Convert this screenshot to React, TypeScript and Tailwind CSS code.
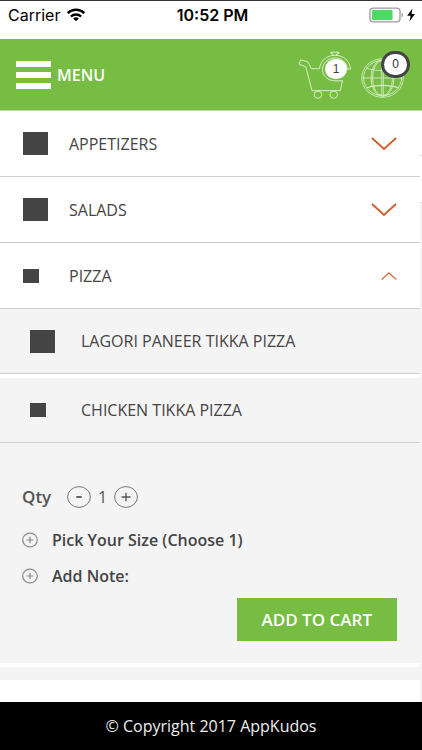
import { useState } from "react";
import type { ReactNode } from "react";
import clsx from "clsx";

interface MenuRowProps {
  label: string;
  open?: boolean;
  nested?: boolean;
  onToggle: () => void;
}

function WifiIcon() {
  return (
    <svg className="h-4 w-5" viewBox="0 0 20 16" fill="none" stroke="#000" strokeWidth="2.4" aria-hidden="true">
      <path d="M1.7 6.1a12 12 0 0 1 16.6 0" />
      <path d="M4.9 9.5a7.4 7.4 0 0 1 10.2 0" />
      <path d="M10 14.3 7.1 11.6a4.2 4.2 0 0 1 5.8 0Z" fill="#000" stroke="none" />
    </svg>
  );
}

function BatteryIcon() {
  return (
    <svg className="h-4 w-12" viewBox="0 0 48 16" aria-hidden="true">
      <rect x="1" y="1.2" width="30" height="13.6" rx="3" fill="#fff" stroke="#9b9b9b" strokeWidth="1.3" />
      <rect x="3" y="3" width="20.5" height="10" rx="1" fill="#4cd964" />
      <path d="M32.6 5.6c1.9.9 1.9 4 0 4.9Z" fill="#9b9b9b" />
      <path d="m43.4 1.6-5.2 7.2h3.4l-1.2 5.8 5.6-7.6h-3.4Z" fill="#000" />
    </svg>
  );
}

function StatusBar() {
  return (
    <div className="grid h-[39px] shrink-0 grid-cols-3 items-center border-t border-[#333] bg-white pr-[5px] pb-2.5 pl-2 font-['Inter',sans-serif] text-black">
      <span className="flex items-center gap-1.5 text-base">
        Carrier
        <WifiIcon />
      </span>
      <span className="text-center text-base font-semibold whitespace-nowrap">10:52 PM</span>
      <span className="flex justify-end">
        <BatteryIcon />
      </span>
    </div>
  );
}

function CartIcon() {
  return (
    <svg className="h-12 w-[53px]" viewBox="0 0 53 48" fill="none" stroke="#d9efc8" strokeWidth="1" strokeLinejoin="round" aria-hidden="true">
      <path d="M21.500 17.700h-8.200L10 11 2.700 8.800 1 13.200l6.700 2.500L14 39.700h28.300l2.200-10.200" />
      <path d="M21.500 17.700C22.200 9.800 28.700 4.300 37 4.300s15 5.500 15.600 13.900h-3.100C48.800 11.500 43.600 7 37.200 7 29.900 7 24.500 12.200 24.500 18.500c0 6.300 5.400 11.300 12.400 11.300h7.600" />
      <path d="M35 4.300V3l-2.200-.6V1.200h8v1.200L38.600 3v1.300" />
      <ellipse cx="20" cy="43.700" rx="3.800" ry="3.600" />
      <ellipse cx="35.700" cy="43.700" rx="3.800" ry="3.600" />
    </svg>
  );
}

function GlobeIcon() {
  return (
    <svg className="h-10 w-[43px]" viewBox="0 0 43 40" fill="none" stroke="#d3ecc0" strokeWidth="0.9" aria-hidden="true">
      <ellipse cx="21.500" cy="20" rx="20.800" ry="19.300" />
      <ellipse cx="21.500" cy="20" rx="19" ry="17.600" />
      <ellipse cx="21.500" cy="20" rx="11.500" ry="18.400" />
      <ellipse cx="21.500" cy="20" rx="10" ry="17.600" />
      <path d="M20.700 1.500v37M22.300 1.500v37M1.500 20h40" />
      <path d="M5.500 10c8.500 3.500 23.500 3.500 32 0" />
      <path d="M5.500 30c8.500-3.500 23.500-3.500 32 0" strokeWidth="1.200" />
    </svg>
  );
}

function Header() {
  return (
    <header className="flex h-[72px] shrink-0 items-center justify-between border-b border-[#bfdca8] bg-[#77bc43] px-4">
      <button type="button" className="flex items-center gap-1.5 text-white">
        <span className="grid gap-[5px]" aria-hidden="true">
          <span className="h-1.5 w-[35px] bg-white" />
          <span className="h-1.5 w-[35px] bg-white" />
          <span className="h-1.5 w-[35px] bg-white" />
        </span>
        <span className="text-base font-semibold">MENU</span>
      </button>
      <div className="flex items-end gap-2.5 pr-0.5">
        <button type="button" className="relative" aria-label="Cart">
          <CartIcon />
          <span className="absolute top-2 right-1 grid h-5 w-[22px] place-items-center rounded-full bg-white font-['Liberation_Sans',sans-serif] text-xs text-[#444]">
            1
          </span>
        </button>
        <button type="button" className="relative pb-px" aria-label="Language">
          <GlobeIcon />
          <span className="absolute -top-[7px] -right-1.5 grid h-[27px] w-[29px] place-items-center rounded-full border-3 border-[#444] bg-white font-['Liberation_Sans',sans-serif] text-xs text-[#333]">
            0
          </span>
        </button>
      </div>
    </header>
  );
}

function Chevron({ open }: { open: boolean }) {
  return (
    <svg
      className={open ? "h-2 w-4" : "h-[13px] w-[26px]"}
      viewBox={open ? "0 0 16 8" : "0 0 26 13"}
      fill="none"
      stroke={open ? "#d4704a" : "#d4592a"}
      strokeWidth={open ? 1.3 : 1.8}
      aria-hidden="true"
    >
      <path d={open ? "m.7 7.500 7.300-6.600 7.300 6.600" : "m1 1 12 11L25 1"} />
    </svg>
  );
}

function MenuRow({ label, open = false, nested = false, onToggle }: MenuRowProps) {
  return (
    <button
      type="button"
      aria-expanded={open}
      onClick={onToggle}
      className={clsx(
        "flex w-full items-center border-b border-[#cfcfcf] pr-[23px] text-left text-base text-[#444]",
        nested ? "h-[65px] bg-[#f4f4f4] pl-[30px]" : "h-[66px] bg-white pl-[23px]"
      )}
    >
      <span className={clsx("shrink-0", nested ? "w-[51px]" : "w-[46px]")} aria-hidden="true">
        <span className={clsx("block bg-[#444]", open ? "h-3.5 w-4" : "h-[23px] w-[25px]")} />
      </span>
      <span className="flex-1">{label}</span>
      {nested ? null : <Chevron open={open} />}
    </button>
  );
}

function PlusCircle() {
  return (
    <svg className="h-4 w-4" viewBox="0 0 16 16" fill="none" stroke="#888" strokeWidth="1.200" aria-hidden="true">
      <ellipse cx="8" cy="8" rx="7.300" ry="6.900" />
      <path d="M8 4.700v6.600M4.500 8h7" />
    </svg>
  );
}

function OptionButton({ children }: { children: ReactNode }) {
  return (
    <button type="button" className="flex h-6 items-center gap-3.5 text-base font-semibold text-[#444]">
      <PlusCircle />
      {children}
    </button>
  );
}

function QtyButton({ label, plus = false, onClick }: { label: string; plus?: boolean; onClick: () => void }) {
  return (
    <button type="button" aria-label={label} onClick={onClick}>
      <svg className="h-[22px] w-6" viewBox="0 0 24 22" fill="none" stroke="#555" aria-hidden="true">
        <ellipse cx="12" cy="11" rx="11.400" ry="10.400" stroke="#777" />
        <path d={plus ? "M12 6.700v8.600M7.500 11h9" : "M9.300 11h5.400"} strokeWidth={plus ? 1.3 : 1.8} />
      </svg>
    </button>
  );
}

function ItemDetails() {
  const [qty, setQty] = useState(1);

  return (
    <section className="bg-[#f4f4f4] pt-[42px] pr-[23px] pb-[22px] pl-[22px]">
      <div className="flex h-6 items-center text-[#555]">
        <span className="w-[45px] text-[17px] font-semibold">Qty</span>
        <QtyButton label="Decrease quantity" onClick={() => setQty(Math.max(1, qty - 1))} />
        <output className="w-[23px] text-center text-base">{qty}</output>
        <QtyButton label="Increase quantity" plus onClick={() => setQty(qty + 1)} />
      </div>
      <div className="mt-[19px] grid gap-3">
        <OptionButton>Pick Your Size (Choose 1)</OptionButton>
        <OptionButton>Add Note:</OptionButton>
      </div>
      <div className="mt-2.5 flex justify-end">
        <button type="button" className="h-[43px] bg-[#77bc43] px-[25px] text-[17px] font-semibold text-white">
          ADD TO CART
        </button>
      </div>
    </section>
  );
}

export default function App() {
  const [pizzaOpen, setPizzaOpen] = useState(true);
  const [appetizersOpen, setAppetizersOpen] = useState(false);
  const [saladsOpen, setSaladsOpen] = useState(false);

  return (
    <div className="flex min-h-screen flex-col bg-white font-['Open_Sans',sans-serif]">
      <StatusBar />
      <Header />
      <div className="flex flex-1">
        <main className="min-w-0 flex-1">
          <MenuRow label="APPETIZERS" open={appetizersOpen} onToggle={() => setAppetizersOpen(!appetizersOpen)} />
          <MenuRow label="SALADS" open={saladsOpen} onToggle={() => setSaladsOpen(!saladsOpen)} />
          <MenuRow label="PIZZA" open={pizzaOpen} onToggle={() => setPizzaOpen(!pizzaOpen)} />
          {pizzaOpen ? (
            <>
              <MenuRow nested label="LAGORI PANEER TIKKA PIZZA" onToggle={() => undefined} />
              <div className="h-1 bg-white" />
              <MenuRow nested open label="CHICKEN TIKKA PIZZA" onToggle={() => undefined} />
              <ItemDetails />
              <div className="h-1 bg-white" />
              <div className="h-[13px] bg-[#f4f4f4]" />
            </>
          ) : null}
        </main>
        {/* edge of the page behind the menu */}
        <div className="flex w-0.5 shrink-0 flex-col" aria-hidden="true">
          <div className="h-[45px] border-b border-[#ddd]" />
          <div className="h-[47px] border-b border-[#ddd]" />
          <div className="flex-1 bg-[#f4f4f4]" />
        </div>
      </div>
      <footer className="grid h-12 shrink-0 place-items-center bg-black text-base text-[#eee]">© Copyright 2017 AppKudos</footer>
    </div>
  );
}
